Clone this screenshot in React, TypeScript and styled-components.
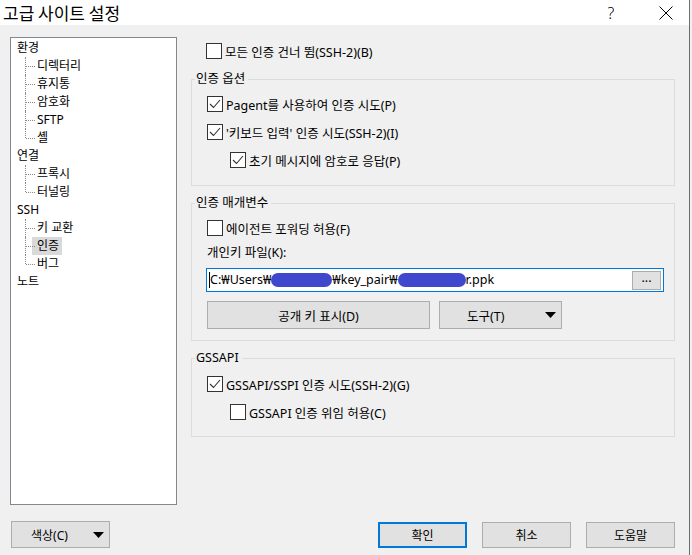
import React from 'react'
import styled, { createGlobalStyle } from 'styled-components'

const GlobalStyle = createGlobalStyle`
  html, body {
    margin: 0;
    padding: 0;
    background: #f0f0f0;
  }
  body {
    font-family: "Noto Sans", "Noto Sans CJK KR", sans-serif;
    font-size: 12px;
    color: #000000;
  }
`

const Window = styled.div`
  width: 689px;
  height: 555px;
  display: flex;
  flex-direction: column;
  background: #f0f0f0;
  border-right: 1px solid #6e6e6e;
`

const TitleBar = styled.div`
  height: 25px;
  flex: none;
  display: flex;
  align-items: center;
  background: #ffffff;
`

const Title = styled.div`
  flex: 1;
  padding-left: 3px;
  font-family: "Noto Sans CJK KR", sans-serif;
  font-size: 17px;
  line-height: 25px;
`

const HelpMark = styled.span`
  width: 20px;
  margin-right: 38px;
  text-align: center;
  font-size: 16px;
  font-weight: 300;
`

const CloseButton = styled.span`
  display: flex;
  width: 14px;
  margin-right: 16px;
`

const Main = styled.div`
  flex: 1;
  display: flex;
  padding: 12px 0 0 10px;
`

const Tree = styled.ul`
  list-style: none;
  margin: 0;
  padding: 1px 0 0;
  width: 165px;
  height: 465px;
  background: #ffffff;
  border: 1px solid #828790;
`

const TreeNode = styled.li`
  height: 18px;
  line-height: 18px;
  padding-left: 6px;
`

const TreeChild = styled.li<{ $last?: boolean }>`
  position: relative;
  height: 18px;
  line-height: 18px;
  padding-left: 21px;

  &::before {
    content: '';
    position: absolute;
    left: 14px;
    top: 0;
    height: ${p => (p.$last ? '9px' : '18px')};
    border-left: 1px dotted #8a8a8a;
  }
  &::after {
    content: '';
    position: absolute;
    left: 15px;
    top: 9px;
    width: 9px;
    border-top: 1px dotted #8a8a8a;
  }
`

const TreeLabel = styled.span<{ $selected?: boolean }>`
  display: inline-block;
  padding: 0 3px 0 5px;
  background: ${p => (p.$selected ? '#d9d9d9' : 'transparent')};
`

const Content = styled.div`
  width: 484px;
  margin-left: 14px;
  display: flex;
  flex-direction: column;
  font-size: 12.5px;
`

const Row = styled.label<{ $indent?: boolean }>`
  display: flex;
  align-items: center;
  gap: 3px;
  height: 28px;
  padding-left: ${p => (p.$indent ? '38px' : '15px')};
`

const Box = styled.span`
  flex: none;
  width: 14px;
  height: 14px;
  border: 1px solid #333333;
  background: #ffffff;
  display: flex;
  align-items: center;
  justify-content: center;
`

const Group = styled.fieldset<{ $top: number; $pt: number; $pb: number }>`
  margin: ${p => p.$top}px 0 0;
  padding: ${p => p.$pt}px 0 ${p => p.$pb}px;
  border: 1px solid #dcdcdc;
  min-width: 0;
`

const Legend = styled.legend`
  margin-left: 3px;
  padding: 0 3px 0 1px;
  line-height: 16px;
`

const FieldLabel = styled.div`
  padding-left: 15px;
  margin-top: 3px;
  line-height: 16px;
`

const PathInput = styled.div`
  display: flex;
  align-items: center;
  margin: 7px 10px 0 14px;
  height: 22px;
  background: #ffffff;
  border: 1px solid #0078d7;
  padding-left: 2px;
`

const PathText = styled.span`
  flex: 1;
  display: flex;
  align-items: center;
  white-space: nowrap;
  border-left: 1px solid #000000;
  line-height: 16px;
`

const Redact = styled.span<{ $w: number }>`
  display: inline-block;
  width: ${p => p.$w}px;
  height: 14px;
  background: #3f48cc;
  border-radius: 7px;
`

const Browse = styled.span`
  width: 27px;
  height: 17px;
  margin-right: 2px;
  background: #e1e1e1;
  border: 1px solid #adadad;
  text-align: center;
  line-height: 12px;
`

const ButtonRow = styled.div`
  display: flex;
  gap: 9px;
  margin: 9px 0 0 15px;
`

const Button = styled.button<{ $w: number; $h?: number; $primary?: boolean }>`
  box-sizing: border-box;
  width: ${p => p.$w}px;
  height: ${p => p.$h ?? 28}px;
  display: flex;
  align-items: center;
  justify-content: center;
  gap: 6px;
  padding: 0;
  font: inherit;
  color: #000000;
  background: #e1e1e1;
  border: ${p => (p.$primary ? '2px solid #0078d7' : '1px solid #adadad')};
`

const MenuButton = styled(Button)`
  justify-content: space-between;
  padding: 0 5px 0 ${p => (p.$w > 110 ? '27px' : '19px')};
`

const Footer = styled.div`
  flex: none;
  display: flex;
  align-items: flex-end;
  padding: 0 14px 7px 11px;
`

const Spacer = styled.div`
  flex: 1;
`

const FooterButtons = styled.div`
  display: flex;
  gap: 15px;
`

const Check = ({ on }: { on?: boolean }) => (
  <Box>
    {on && (
      <svg width="12" height="10" viewBox="0 0 12 10">
        <path d="M1 5 L4.5 8.5 L11 1" fill="none" stroke="#333" strokeWidth="1.1" />
      </svg>
    )}
  </Box>
)

const Caret = () => (
  <svg width="11" height="6" viewBox="0 0 11 6">
    <path d="M0 0 H11 L5.5 6 Z" fill="#000" />
  </svg>
)

const App = () => (
  <>
    <GlobalStyle />
    <Window>
      <TitleBar>
        <Title>고급 사이트 설정</Title>
        <HelpMark>?</HelpMark>
        <CloseButton>
          <svg width="14" height="14" viewBox="0 0 14 14">
            <path d="M0.5 0.5 L13.5 13.5 M13.5 0.5 L0.5 13.5" stroke="#000" strokeWidth="1" />
          </svg>
        </CloseButton>
      </TitleBar>
      <Main>
        <Tree>
          <TreeNode>환경</TreeNode>
          <TreeChild><TreeLabel>디렉터리</TreeLabel></TreeChild>
          <TreeChild><TreeLabel>휴지통</TreeLabel></TreeChild>
          <TreeChild><TreeLabel>암호화</TreeLabel></TreeChild>
          <TreeChild><TreeLabel>SFTP</TreeLabel></TreeChild>
          <TreeChild $last><TreeLabel>셸</TreeLabel></TreeChild>
          <TreeNode>연결</TreeNode>
          <TreeChild><TreeLabel>프록시</TreeLabel></TreeChild>
          <TreeChild $last><TreeLabel>터널링</TreeLabel></TreeChild>
          <TreeNode>SSH</TreeNode>
          <TreeChild><TreeLabel>키 교환</TreeLabel></TreeChild>
          <TreeChild><TreeLabel $selected>인증</TreeLabel></TreeChild>
          <TreeChild $last><TreeLabel>버그</TreeLabel></TreeChild>
          <TreeNode>노트</TreeNode>
        </Tree>
        <Content>
          <Row>
            <Check />
            모든 인증 건너 뜀(SSH-2)(B)
          </Row>
          <Group $top={6} $pt={3} $pb={11}>
            <Legend>인증 옵션</Legend>
            <Row>
              <Check on />
              Pagent를 사용하여 인증 시도(P)
            </Row>
            <Row>
              <Check on />
              '키보드 입력' 인증 시도(SSH-2)(I)
            </Row>
            <Row $indent>
              <Check on />
              초기 메시지에 암호로 응답(P)
            </Row>
          </Group>
          <Group $top={9} $pt={3} $pb={11}>
            <Legend>인증 매개변수</Legend>
            <Row>
              <Check />
              에이전트 포워딩 허용(F)
            </Row>
            <FieldLabel>개인키 파일(K):</FieldLabel>
            <PathInput>
              <PathText>
                C:₩Users₩<Redact $w={61} />₩key_pair₩<Redact $w={68} />r.ppk
              </PathText>
              <Browse>...</Browse>
            </PathInput>
            <ButtonRow>
              <Button $w={223}>공개 키 표시(D)</Button>
              <MenuButton $w={123}>
                도구(T)
                <Caret />
              </MenuButton>
            </ButtonRow>
          </Group>
          <Group $top={9} $pt={4} $pb={10}>
            <Legend>GSSAPI</Legend>
            <Row>
              <Check on />
              GSSAPI/SSPI 인증 시도(SSH-2)(G)
            </Row>
            <Row $indent>
              <Check />
              GSSAPI 인증 위임 허용(C)
            </Row>
          </Group>
        </Content>
      </Main>
      <Footer>
        <MenuButton $w={99} $h={27}>
          색상(C)
          <Caret />
        </MenuButton>
        <Spacer />
        <FooterButtons>
          <Button $w={89} $h={26} $primary>확인</Button>
          <Button $w={89} $h={26}>취소</Button>
          <Button $w={89} $h={26}>도움말</Button>
        </FooterButtons>
      </Footer>
    </Window>
  </>
)

export default App
